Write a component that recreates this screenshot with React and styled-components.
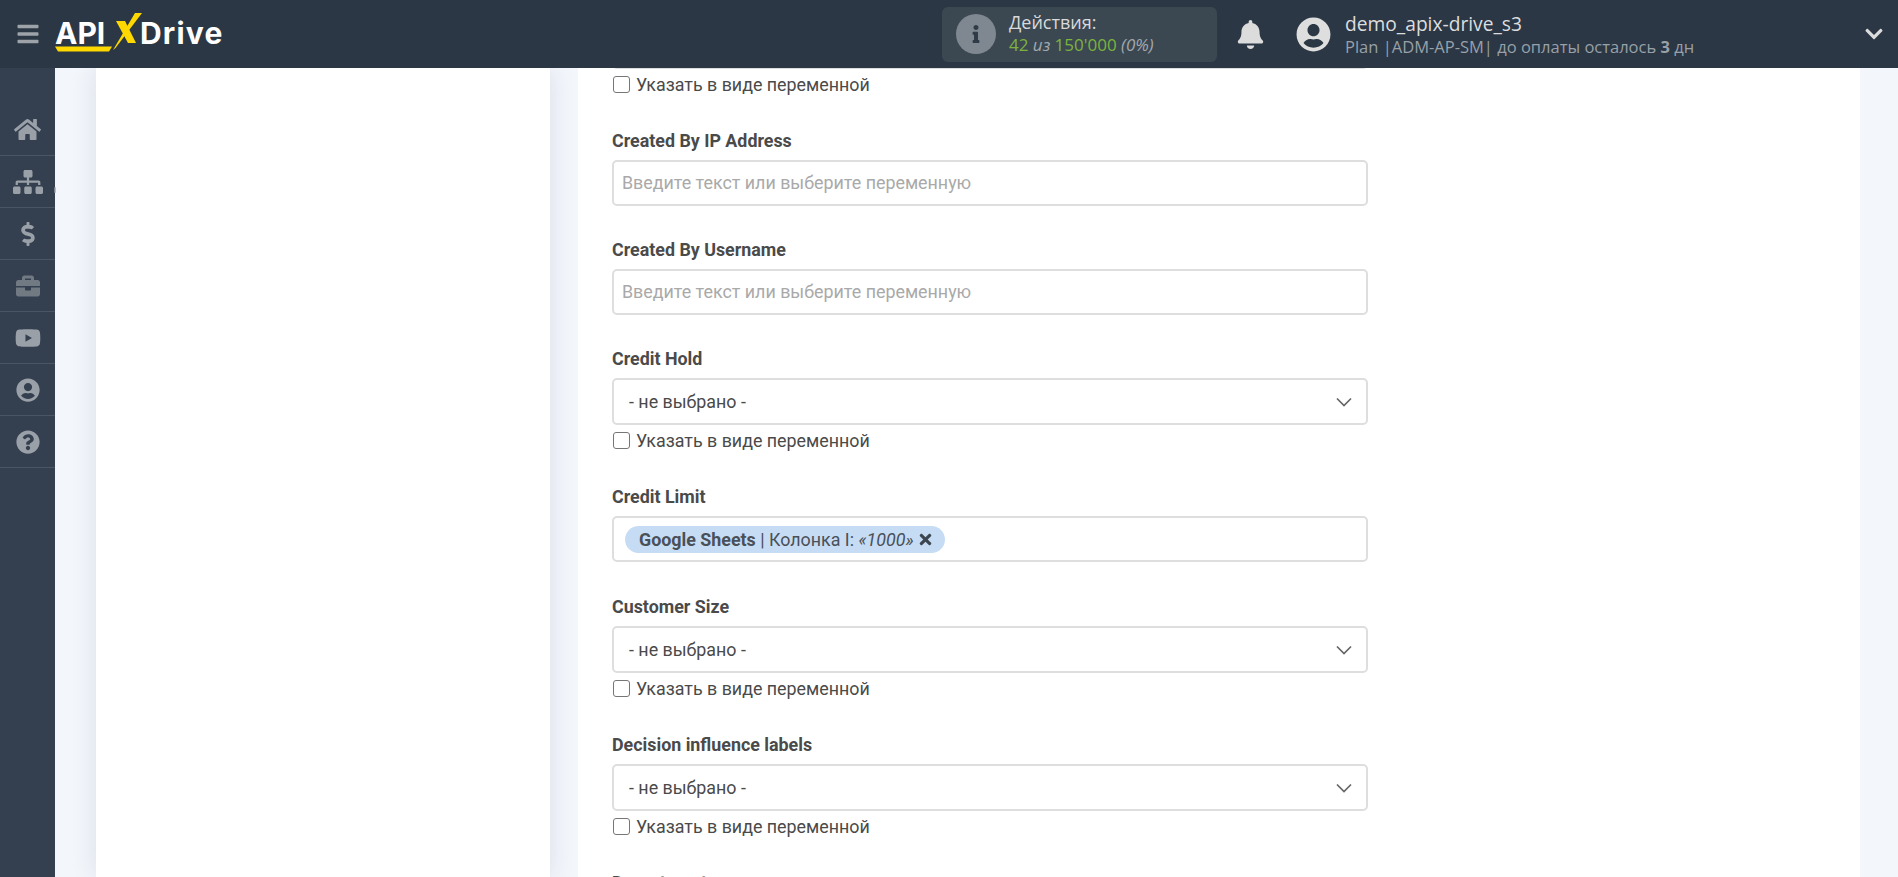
import React from "react";
import styled, { createGlobalStyle } from "styled-components";
import {
  FaHome, FaSitemap, FaDollarSign, FaBriefcase, FaYoutube, FaUserCircle,
  FaQuestionCircle, FaInfo, FaBell, FaChevronDown, FaBars, FaTimes,
} from "react-icons/fa";

const Global = createGlobalStyle`
  html, body { margin: 0; padding: 0; height: 100%; overflow: hidden; background: #f3f6fb; }
  * { box-sizing: border-box; }
  #root { height: 100%; }
`;

const Page = styled.div`
  display: flex; flex-direction: column; width: 1898px; height: 877px;
  font-family: Roboto, "Liberation Sans", sans-serif; color: #4a4a4a;
`;
const Header = styled.header`
  flex: 0 0 68px; display: flex; align-items: center; background: #2b3744;
`;
const Burger = styled.div`
  display: flex; width: 55px; justify-content: center; color: #9ea3a9; font-size: 24px; padding-left: 1px;
`;
const Logo = styled.div`
  position: relative; display: flex; align-items: center; width: 170px; height: 44px; padding-bottom: 2px;
  font-family: Inter, "Open Sans", sans-serif; font-size: 30px; font-weight: 700; color: #fff;
`;
const LogoMark = styled.svg`
  position: absolute; left: 0; top: 0;
`;
const LogoApi = styled.span`width: 66px;`;
const LogoDrive = styled.span`margin-left: 19px; letter-spacing: 1.2px;`;
const Spacer = styled.div`flex: 0 0 ${p => p.$w}px;`;
const Actions = styled.div`
  flex: 0 0 275px; height: 55px; display: flex; align-items: center; gap: 13px; padding-left: 14px;
  background: #3b4852; border-radius: 6px; font-family: "Open Sans", sans-serif;
`;
const InfoDisc = styled.div`
  width: 40px; height: 40px; border-radius: 50%; background: #7f8890; color: #2f3b47;
  display: flex; align-items: center; justify-content: center; font-size: 18px;
`;
const ActionText = styled.div`display: flex; flex-direction: column; margin-top: -3px;`;
const ActionTitle = styled.div`font-size: 18px; line-height: 24px; color: #d8d9da;`;
const ActionCount = styled.div`font-size: 17px; line-height: 21px; color: #7cb33d;`;
const Muted = styled.i`color: #a4a9ae;`;
const Bell = styled.div`
  flex: 0 0 26px; margin-left: 19px; color: #dcdcdc; font-size: 29px; display: flex; justify-content: center;
`;
const Avatar = styled.div`
  margin-left: 31px; color: #dedede; font-size: 35px; display: flex;
`;
const UserText = styled.div`
  margin-left: 14px; flex: 1; display: flex; flex-direction: column; font-family: "Open Sans", sans-serif;
`;
const UserName = styled.div`font-size: 19.2px; line-height: 24px; color: #dcdddf;`;
const UserPlan = styled.div`font-size: 16.5px; line-height: 21px; color: #98a0a8;`;
const Chevron = styled.div`
  margin-right: 14px; color: #dcdcdc; font-size: 20px; display: flex;
`;

const Body = styled.div`flex: 1; display: flex; min-height: 0; overflow: hidden;`;
const Side = styled.nav`
  position: relative; flex: 0 0 55px; display: flex; flex-direction: column; padding-top: 36px; background: #343f4f;
`;
const SideItem = styled.div`
  height: 52px; display: flex; align-items: center; justify-content: center; flex: 0 0 auto;
  border-bottom: 1px solid #4b5563; color: ${p => p.$dim ? "#717983" : "#9aa0a8"}; font-size: ${p => p.$size || 24}px;
`;
const Tick = styled.span`
  position: absolute; left: 54px; top: 119px; width: 2px; height: 6px; background: #9aa0a8; border-radius: 1px; opacity: .7;
`;
const Canvas = styled.div`
  flex: 1; display: flex; padding: 0 38px 0 41px; gap: 28px; min-width: 0;
`;
const LeftCard = styled.aside`
  flex: 0 0 454px; background: #fff; box-shadow: 0 0 24px rgba(40, 60, 90, .12);
`;
const MainCard = styled.main`
  flex: 1; background: #fff; padding: 0 34px; overflow: hidden;
`;
const Form = styled.div`
  width: 756px; margin-top: -46px; display: flex; flex-direction: column;
`;
const Field = styled.section`
  display: flex; flex-direction: column; margin-bottom: ${p => p.$gap ?? 38}px;
`;
const Label = styled.label`
  font-size: 17.85px; line-height: 20px; font-weight: 700; color: #4a4a4a; margin-bottom: 9px;
`;
const Control = styled.div`
  height: ${p => p.$h || 46}px; display: flex; align-items: center; border: 2px solid #dedede; border-radius: 5px;
  background: #fff; padding: 0 ${p => p.$pad ?? 8}px; font-size: 17.85px;
`;
const Placeholder = styled.span`color: #a9a9a9; margin-top: -1px;`;
const SelectValue = styled.span`flex: 1; padding-left: 7px; color: #4a4a4a;`;
const Caret = styled.svg`margin-right: 6px; margin-left: auto; display: block;`;
const CheckRow = styled.label`
  display: flex; align-items: center; gap: 6px; height: 17px; margin-top: 7px; font-size: 17.85px; line-height: 17px; color: #4a4a4a;
`;
const Box = styled.input.attrs({ type: "checkbox" })`
  appearance: none; width: 17px; height: 17px; margin: 0 0 0 1px; background: #fff; border: 1.5px solid #767676; border-radius: 3px;
`;
const Pill = styled.div`
  display: flex; align-items: center; gap: 3px; height: 27px; padding: 0 11px 0 14px; margin-left: 1px;
  border-radius: 14px; background: #c6dcf5; font-size: 17.85px; color: #4a5058;
`;
const PillClose = styled.span`display: flex; font-size: 17px; color: #3c4650;`;

const CaretIcon = () => (
  <Caret width="16" height="10" viewBox="0 0 16 10">
    <path d="M1 1.5 8 8.5 15 1.5" fill="none" stroke="#666" strokeWidth="1.7" />
  </Caret>
);

const Check = () => (
  <CheckRow><Box />Указать в виде переменной</CheckRow>
);

const SelectField = ({ label }) => (
  <Field>
    {label && <Label>{label}</Label>}
    <Control $h={47}>{label && <SelectValue>- не выбрано -</SelectValue>}<CaretIcon /></Control>
    <Check />
  </Field>
);

const TextField = ({ label }) => (
  <Field $gap={34}>
    <Label>{label}</Label>
    <Control><Placeholder>Введите текст или выберите переменную</Placeholder></Control>
  </Field>
);

export default function App() {
  return (
    <Page>
      <Global />
      <Header>
        <Burger><FaBars /></Burger>
        <Logo>
          <LogoMark width="170" height="44" viewBox="0 0 170 44">
            <path d="M0 34.5 L57 34.5 L54 39.5 L3 39.5 Z" fill="#ffd800" />
            <path d="M80 1 L87 1 L60.5 36 L58 38 Z" fill="#ffd800" />
            <path d="M61 9 L70 9 L81 31 L73 31 Z" fill="#ffd800" />
          </LogoMark>
          <LogoApi>API</LogoApi>
          <LogoDrive>Drive</LogoDrive>
        </Logo>
        <Spacer $w={717} />
        <Actions>
          <InfoDisc><FaInfo /></InfoDisc>
          <ActionText>
            <ActionTitle>Действия:</ActionTitle>
            <ActionCount>42 <Muted>из</Muted> 150'000 <Muted>(0%)</Muted></ActionCount>
          </ActionText>
        </Actions>
        <Bell><FaBell /></Bell>
        <Avatar><FaUserCircle /></Avatar>
        <UserText>
          <UserName>demo_apix-drive_s3</UserName>
          <UserPlan>Plan |ADM-AP-SM| до оплаты осталось <b>3</b> дн</UserPlan>
        </UserText>
        <Chevron><FaChevronDown /></Chevron>
      </Header>
      <Body>
        <Side>
          <SideItem $size={27}><FaHome /></SideItem>
          <SideItem $size={30}><FaSitemap /></SideItem>
          <SideItem><FaDollarSign /></SideItem>
          <SideItem $dim><FaBriefcase /></SideItem>
          <SideItem $size={26}><FaYoutube /></SideItem>
          <SideItem><FaUserCircle /></SideItem>
          <SideItem><FaQuestionCircle /></SideItem>
          <Tick />
        </Side>
        <Canvas>
          <LeftCard />
          <MainCard>
            <Form>
              <SelectField />
              <TextField label="Created By IP Address" />
              <TextField label="Created By Username" />
              <SelectField label="Credit Hold" />
              <Field $gap={35}>
                <Label>Credit Limit</Label>
                <Control $pad={10}>
                  <Pill>
                    <span><b>Google Sheets</b> | Колонка I: <i>«1000»</i></span>
                    <PillClose><FaTimes /></PillClose>
                  </Pill>
                </Control>
              </Field>
              <SelectField label="Customer Size" />
              <SelectField label="Decision influence labels" />
              <Field><Label>Department</Label></Field>
            </Form>
          </MainCard>
        </Canvas>
      </Body>
    </Page>
  );
}
